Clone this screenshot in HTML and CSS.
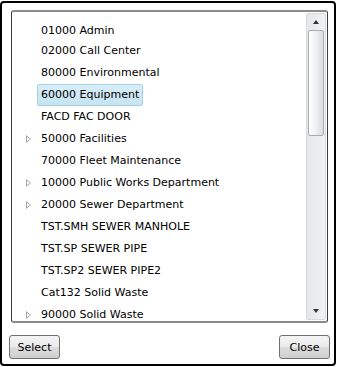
FILE: index.html
```html
<!DOCTYPE html>
<html lang="en">
<head>
    <meta charset="UTF-8">
    <title>Select Department</title>
    <link rel="stylesheet" href="styles.css">
</head>
<body>
    <div class="dialog">
        <div class="listbox">
            <ul class="tree">
                <li class="item first"><span class="label">01000 Admin</span></li>
                <li class="item"><span class="label">02000 Call Center</span></li>
                <li class="item"><span class="label">80000 Environmental</span></li>
                <li class="item"><span class="label selected">60000 Equipment</span></li>
                <li class="item"><span class="label">FACD FAC DOOR</span></li>
                <li class="item"><span class="expander"></span><span class="label">50000 Facilities</span></li>
                <li class="item"><span class="label">70000 Fleet Maintenance</span></li>
                <li class="item"><span class="expander"></span><span class="label">10000 Public Works Department</span></li>
                <li class="item"><span class="expander"></span><span class="label">20000 Sewer Department</span></li>
                <li class="item"><span class="label">TST.SMH SEWER MANHOLE</span></li>
                <li class="item"><span class="label">TST.SP SEWER PIPE</span></li>
                <li class="item"><span class="label">TST.SP2 SEWER PIPE2</span></li>
                <li class="item"><span class="label">Cat132 Solid Waste</span></li>
                <li class="item"><span class="expander"></span><span class="label">90000 Solid Waste</span></li>
            </ul>
            <div class="scrollbar">
                <div class="arrow up"></div>
                <div class="track">
                    <div class="thumb"></div>
                </div>
                <div class="arrow down"></div>
            </div>
        </div>
        <div class="actions">
            <button class="btn">Select</button>
            <button class="btn">Close</button>
        </div>
    </div>
</body>
</html>
```

FILE: styles.css
```css
body {
    margin: 0;
    background: #ffffff;
    font-family: 'DejaVu Sans', Verdana, sans-serif;
    font-size: 11px;
    color: #000000;
}

.dialog {
    width: 332px;
    height: 361px;
    margin-top: 1px;
    border: 2px solid #000000;
    border-radius: 4px;
    background: #ffffff;
    display: flex;
    flex-direction: column;
}

.listbox {
    width: 315px;
    height: 309px;
    margin: 7px 0 0 9px;
    border: 1px solid #3c3c3c;
    border-top: 2px solid #8a8a8a;
    border-bottom: 2px solid #8a8a8a;
    border-radius: 3px;
    display: flex;
    overflow: hidden;
}

.tree {
    list-style: none;
    margin: 0;
    padding: 0;
    flex: 1;
    overflow: hidden;
}

.item {
    height: 22px;
    display: flex;
    align-items: center;
    padding-left: 25px;
}

.item.first {
    height: 18px;
    margin-top: 10px;
}

.label {
    padding: 0 3px;
    height: 20px;
    line-height: 20px;
    border: 1px solid transparent;
    border-radius: 2px;
    white-space: nowrap;
}

.label.selected {
    background: linear-gradient(#d9eef7, #c6e4f1);
    border-color: #a3d2e4;
}

/* little hollow arrow in front of nodes that have children */
.expander {
    width: 0;
    height: 0;
    margin-left: -11px;
    border-top: 4px solid transparent;
    border-bottom: 4px solid transparent;
    border-left: 5px solid #a6a6a6;
    position: relative;
}

.expander::after {
    content: '';
    position: absolute;
    left: -4px;
    top: -2.5px;
    border-top: 2.5px solid transparent;
    border-bottom: 2.5px solid transparent;
    border-left: 3px solid #ffffff;
}

.expander + .label {
    margin-left: 6px;
}

.scrollbar {
    width: 18px;
    margin: 1px 1px 1px 0;
    display: flex;
    flex-direction: column;
    background: linear-gradient(90deg, #e3e7eb, #f0f2f4);
    border: 1px solid #d6dadf;
    border-radius: 2px;
}

.arrow {
    height: 16px;
    display: flex;
    align-items: center;
    justify-content: center;
}

.arrow::before {
    content: '';
    border-left: 3px solid transparent;
    border-right: 3px solid transparent;
}

.arrow.up::before {
    border-bottom: 4px solid #333;
}

.arrow.down::before {
    border-top: 4px solid #333;
}

.track {
    flex: 1;
}

.thumb {
    height: 104px;
    margin: 0 1px;
    border: 1px solid #a8adb3;
    border-radius: 2px;
    background: linear-gradient(90deg, #ffffff, #eef0f2 50%, #d9dde1);
}

.actions {
    display: flex;
    justify-content: space-between;
    padding: 12px 4px 0 7px;
}

.btn {
    width: 51px;
    height: 24px;
    padding: 0;
    font-family: 'DejaVu Sans', Verdana, sans-serif;
    font-size: 11px;
    color: #000;
    border: 1px solid #707070;
    border-radius: 3px;
    background: linear-gradient(#f4f4f4, #ebebeb 50%, #dddddd 51%, #cfcfcf);
}
```
